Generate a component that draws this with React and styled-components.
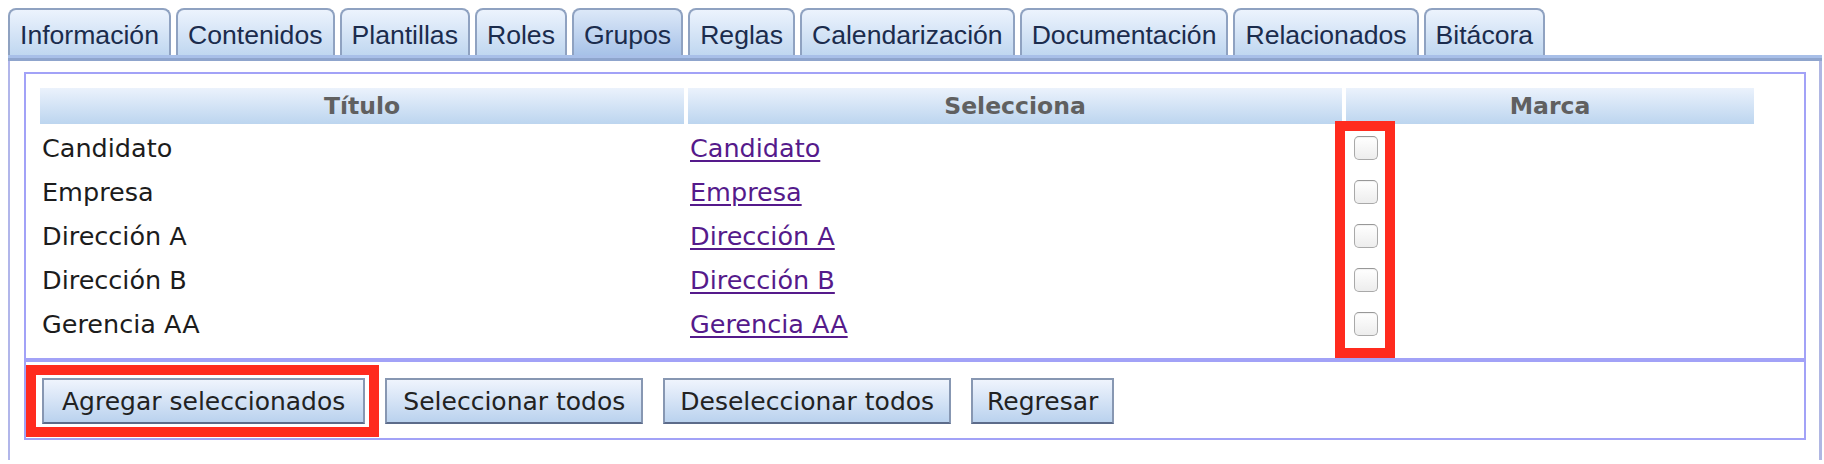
import React from "react";
import styled, { createGlobalStyle } from "styled-components";

const GlobalStyle = createGlobalStyle`
  html, body { margin: 0; padding: 0; background: #ffffff; }
  * { box-sizing: border-box; }
`;

const Page = styled.div`
  padding: 8px 0 0 8px;
  width: 1822px;
`;

const TabBar = styled.div`
  display: flex;
  align-items: flex-end;
  gap: 5px;
`;

const Tab = styled.div`
  font-family: "Liberation Sans", Arial, sans-serif;
  font-size: 26.6px;
  line-height: 30px;
  color: #1b2c4d;
  padding: 10px 10px 5px;
  border: 2px solid #8fa2c1;
  border-bottom: none;
  border-radius: 8px 8px 0 0;
  white-space: nowrap;
  background: ${(p) =>
    p.$active
      ? "linear-gradient(#dce8f8, #a7c2e8)"
      : "linear-gradient(#ecf3fd, #c0d7f0)"};
`;

const TabStrip = styled.div`
  width: 1814px;
  height: 6px;
  background: linear-gradient(#a8bfe8 0 50%, #8fa5cd 50% 100%);
`;

const Panel = styled.div`
  width: 1814px;
  height: 399px;
  border-left: 2px solid #b1b6ea;
  border-right: 3px solid #b0b7e3;
  padding: 11px 13px 0 14px;
`;

const Box = styled.div`
  position: relative;
  border: 2px solid #a2a2f7;
`;

const TableArea = styled.div`
  padding: 10px;
`;

const Grid = styled.table`
  table-layout: fixed;
  width: 1722px;
  border-collapse: separate;
  border-spacing: 4px;
`;

const HeadCell = styled.th`
  height: 36px;
  padding: 0;
  font-family: "DejaVu Sans", Verdana, sans-serif;
  font-weight: bold;
  font-size: 23.5px;
  color: #606060;
  text-align: center;
  vertical-align: middle;
  background: linear-gradient(#ebf2fc, #bcd5ef);
`;

const Cell = styled.td`
  height: 40px;
  padding: 0 2px;
  font-family: "DejaVu Sans", Verdana, sans-serif;
  font-size: 25.5px;
  color: #1c1c1c;
  vertical-align: middle;
  white-space: nowrap;
`;

const Link = styled.a`
  color: #551a8b;
  text-decoration: underline;
  text-decoration-thickness: 2px;
  text-underline-offset: 3px;
`;

const Check = styled.input.attrs({ type: "checkbox" })`
  appearance: none;
  display: block;
  width: 24px;
  height: 24px;
  margin: 0 0 0 6px;
  border: 1.5px solid #a9a9a9;
  border-top-color: #989898;
  border-radius: 5px;
  background: linear-gradient(#ffffff, #ededed);
  box-shadow: inset 0 1px 1px rgba(0, 0, 0, 0.06);
`;

const ButtonRow = styled.div`
  display: flex;
  gap: 20px;
  border-top: 4px solid #a2a2f7;
  padding: 16px 16px 14px;
`;

const Button = styled.button`
  height: 46px;
  padding: 0 ${(p) => p.$pad}px;
  font-family: "DejaVu Sans", Verdana, sans-serif;
  font-size: 25px;
  color: #222222;
  border: 2px solid #8797b2;
  border-bottom-color: #5c6b8a;
  border-radius: 0;
  background: linear-gradient(#eff4fd, #bad2ee);
  white-space: nowrap;
`;

const Highlight = styled.div`
  position: absolute;
  left: ${(p) => p.$left}px;
  top: ${(p) => p.$top}px;
  width: ${(p) => p.$width}px;
  height: ${(p) => p.$height}px;
  border: 10px solid #ff2b1e;
  pointer-events: none;
`;

const tabs = [
  "Información",
  "Contenidos",
  "Plantillas",
  "Roles",
  "Grupos",
  "Reglas",
  "Calendarización",
  "Documentación",
  "Relacionados",
  "Bitácora",
];

const groups = ["Candidato", "Empresa", "Dirección A", "Dirección B", "Gerencia AA"];

const buttons = [
  { label: "Agregar seleccionados", pad: 18 },
  { label: "Seleccionar todos", pad: 16 },
  { label: "Deseleccionar todos", pad: 15 },
  { label: "Regresar", pad: 14 },
];

export default function App() {
  return (
    <>
      <GlobalStyle />
      <Page>
        <TabBar>
          {tabs.map((t) => (
            <Tab key={t} $active={t === "Grupos"}>
              {t}
            </Tab>
          ))}
        </TabBar>
        <TabStrip />
        <Panel>
          <Box>
            <TableArea>
              <Grid>
                <colgroup>
                  <col style={{ width: 644 }} />
                  <col style={{ width: 654 }} />
                  <col style={{ width: 408 }} />
                </colgroup>
                <thead>
                  <tr>
                    <HeadCell>Título</HeadCell>
                    <HeadCell>Selecciona</HeadCell>
                    <HeadCell>Marca</HeadCell>
                  </tr>
                </thead>
                <tbody>
                  {groups.map((g) => (
                    <tr key={g}>
                      <Cell>{g}</Cell>
                      <Cell>
                        <Link href="#">{g}</Link>
                      </Cell>
                      <Cell>
                        <Check />
                      </Cell>
                    </tr>
                  ))}
                </tbody>
              </Grid>
            </TableArea>
            <ButtonRow>
              {buttons.map((b) => (
                <Button key={b.label} type="button" $pad={b.pad}>
                  {b.label}
                </Button>
              ))}
            </ButtonRow>
            <Highlight $left={1309} $top={47} $width={60} $height={237} />
            <Highlight $left={0} $top={291} $width={353} $height={72} />
          </Box>
        </Panel>
      </Page>
    </>
  );
}
